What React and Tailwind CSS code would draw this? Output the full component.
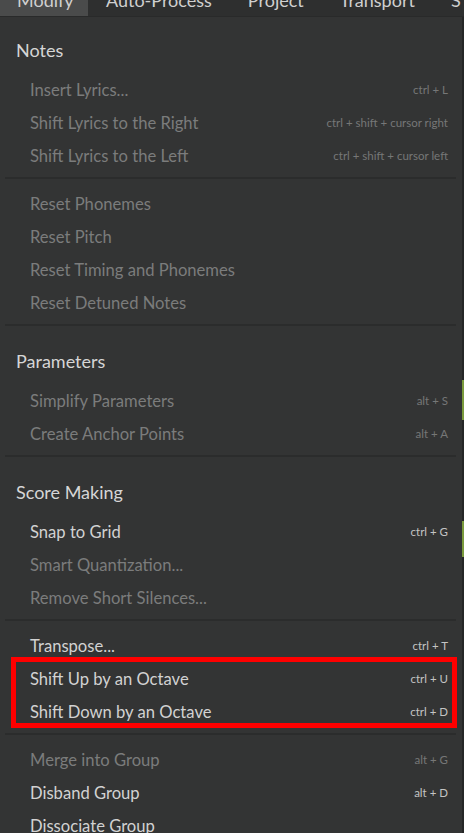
import React from 'react';

const font = { fontFamily: 'Lato, "Open Sans", sans-serif' };

// menu content, grouped the way the separators split it
const groups = [
  {
    header: 'Notes',
    items: [
      { label: 'Insert Lyrics...', key: 'ctrl + L' },
      { label: 'Shift Lyrics to the Right', key: 'ctrl + shift + cursor right' },
      { label: 'Shift Lyrics to the Left', key: 'ctrl + shift + cursor left' },
    ],
  },
  {
    items: [
      { label: 'Reset Phonemes' },
      { label: 'Reset Pitch' },
      { label: 'Reset Timing and Phonemes' },
      { label: 'Reset Detuned Notes' },
    ],
  },
  {
    header: 'Parameters',
    items: [
      { label: 'Simplify Parameters', key: 'alt + S' },
      { label: 'Create Anchor Points', key: 'alt + A' },
    ],
  },
  {
    header: 'Score Making',
    items: [
      { label: 'Snap to Grid', key: 'ctrl + G', on: true },
      { label: 'Smart Quantization...' },
      { label: 'Remove Short Silences...' },
    ],
  },
  {
    items: [
      { label: 'Transpose...', key: 'ctrl + T', on: true },
      { label: 'Shift Up by an Octave', key: 'ctrl + U', on: true, mark: 'start' },
      { label: 'Shift Down by an Octave', key: 'ctrl + D', on: true, mark: 'end' },
    ],
  },
  {
    items: [
      { label: 'Merge into Group', key: 'alt + G' },
      { label: 'Disband Group', key: 'alt + D', on: true },
      { label: 'Dissociate Group', on: true },
    ],
  },
];

function Item({ item }) {
  return (
    <div className="h-[33px] flex items-center justify-between pl-[30px] pr-[14px] pt-[1px]">
      <span className={'text-[16.6px] ' + (item.on ? 'text-[#d2d2d2]' : 'text-[#7b7c7c]')}>{item.label}</span>
      {item.key && (
        <span className={'text-[11.5px] ' + (item.on ? 'text-[#c4c4c4]' : 'text-[#767777]')}>{item.key}</span>
      )}
    </div>
  );
}

function Group({ group, first }) {
  const items = group.items;
  const markAt = items.findIndex(i => i.mark === 'start');
  return (
    <div className={(group.header ? (first ? 'pt-[16px]' : 'pt-[18px]') : 'pt-[8px]') + ' pb-[5px]'}>
      {group.header && (
        <div className="h-[34px] mb-[6px] flex items-center pl-[16px] text-[18px] text-[#d6d6d6]">
          {group.header}
        </div>
      )}
      {markAt < 0
        ? items.map(it => <Item key={it.label} item={it} />)
        : (
          <>
            {items.slice(0, markAt).map(it => <Item key={it.label} item={it} />)}
            <div className="relative">
              {items.slice(markAt).map(it => <Item key={it.label} item={it} />)}
              {/* red highlight frame */}
              <div className="absolute -top-[5px] left-[11px] right-[5px] bottom-0 border-[5px] border-[#ff0000]" />
            </div>
          </>
        )}
    </div>
  );
}

export default function App() {
  const tabs = ['Modify', 'Auto-Process', 'Project', 'Transport', 'S'];
  return (
    <div className="w-[464px] h-[833px] overflow-hidden bg-[#333434] flex flex-col" style={font}>
      {/* menubar, mostly scrolled off the top */}
      <div className="h-[17px] shrink-0 bg-[#2e2f2f] border-b border-[#292a2a] flex overflow-hidden">
        {tabs.map((t, i) => (
          <div
            key={t}
            className={'h-[16px] shrink-0 ' + (i === 0 ? 'bg-[#4a4b4b] w-[88px] pl-[17px]' : 'px-[18px]')}
          >
            <div className="mt-[-9px] text-[18px] leading-[18px] text-[#d0d0d0] whitespace-nowrap">{t}</div>
          </div>
        ))}
      </div>

      <div className="flex flex-1">
        <div className="w-[462px]">
          {groups.map((g, i) => (
            <React.Fragment key={i}>
              {i > 0 && <div className="h-[2px] ml-[5px] mr-[6px] bg-[#2b2c2c]" />}
              <Group group={g} first={i === 0} />
            </React.Fragment>
          ))}
        </div>
        {/* sliver of the window behind */}
        <div className="w-[2px] flex flex-col bg-[#252626]">
          <div className="h-[363px]" />
          <div className="h-[40px] bg-[#7a9a3c]" />
          <div className="h-[101px]" />
          <div className="h-[36px] bg-[#7a9a3c]" />
        </div>
      </div>
    </div>
  );
}
